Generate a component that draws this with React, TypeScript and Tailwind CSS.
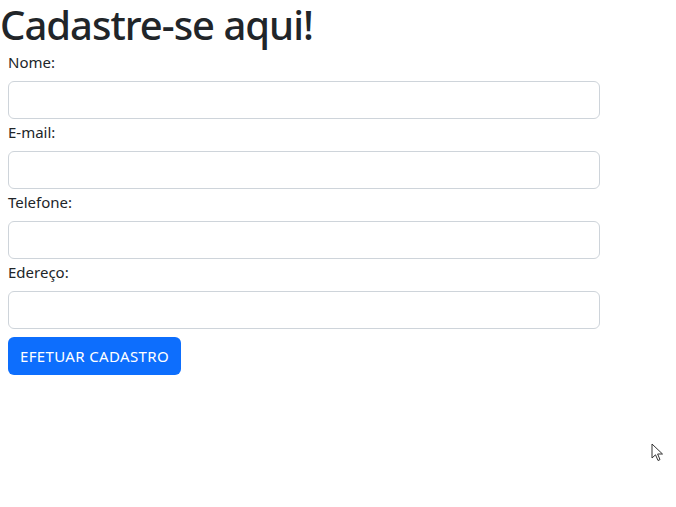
export default function App() {
  const fields = ["Nome:", "E-mail:", "Telefone:", "Edereço:"];

  return (
    <div
      className="relative min-h-[507px] bg-white text-[#212529]"
      style={{ fontFamily: '"Noto Sans", "Open Sans", sans-serif' }}
    >
      <h1 className="m-0 h-[50px] text-[40px] font-medium leading-[50px] tracking-[-1px]">
        Cadastre-se aqui!
      </h1>

      <form className="flex w-[608px] flex-col px-2">
        {fields.map((label) => (
          <div key={label} className="mb-px flex flex-col">
            <label className="mb-[7px] h-6 text-[15px] leading-6">{label}</label>
            <input
              type="text"
              className="h-[38px] w-full rounded-[6px] border border-[#ced4da] bg-white px-3 outline-none"
            />
          </div>
        ))}

        <div className="mt-[7px]">
          <button
            type="button"
            className="h-[38px] rounded-[6px] bg-[#0d6efd] px-3 text-[15px] tracking-[0.35px] text-white"
          >
            EFETUAR CADASTRO
          </button>
        </div>
      </form>

      <svg
        className="absolute left-[651px] top-[443px]"
        width="14"
        height="20"
        viewBox="0 0 14 20"
      >
        <path
          d="M1 1 L1 15 L4.5 11.8 L7 17.5 L9 16.6 L6.6 11 L11.5 11 Z"
          fill="white"
          stroke="#333"
          strokeWidth="1"
          strokeLinejoin="round"
        />
      </svg>
    </div>
  );
}
